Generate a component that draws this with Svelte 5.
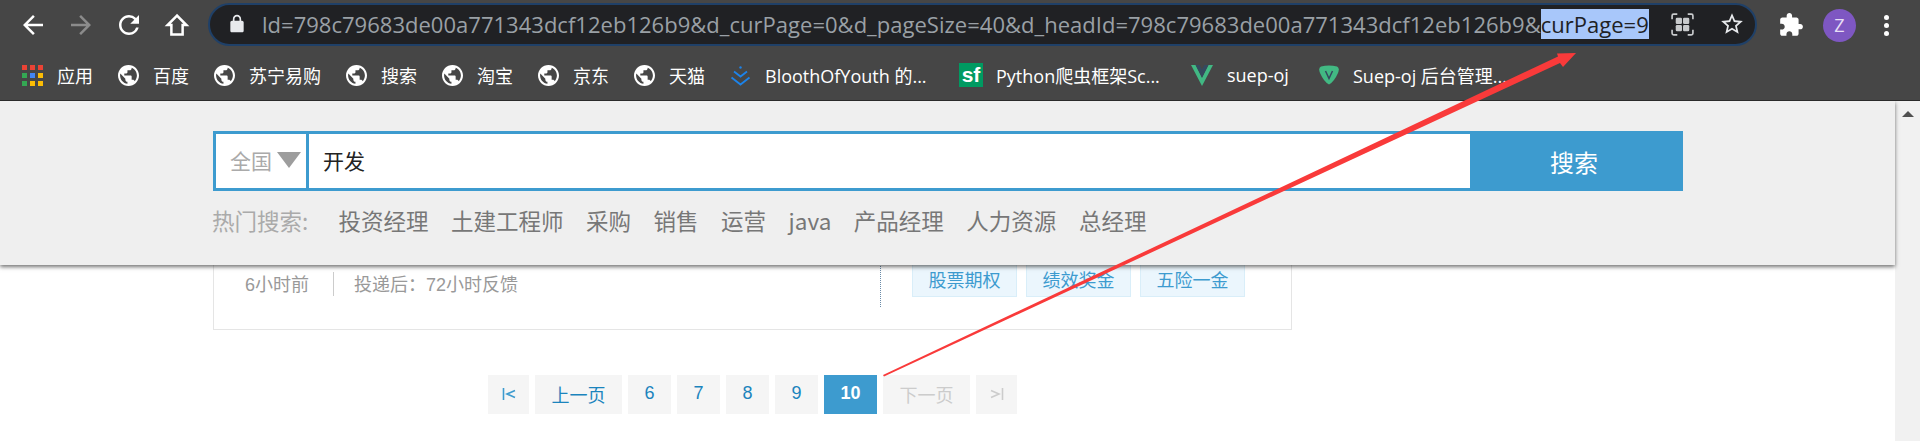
<script lang="ts">
	const bookmarks = [
		{ label: '百度', icon: 'globe' },
		{ label: '苏宁易购', icon: 'globe' },
		{ label: '搜索', icon: 'globe' },
		{ label: '淘宝', icon: 'globe' },
		{ label: '京东', icon: 'globe' },
		{ label: '天猫', icon: 'globe' },
		{ label: 'BloothOfYouth 的...', icon: 'chevrons', width: 169 },
		{ label: 'Python爬虫框架Sc...', icon: 'sf', width: 169 },
		{ label: 'suep-oj', icon: 'vue', width: 67 },
		{ label: 'Suep-oj 后台管理...', icon: 'suep' }
	];
	const appColors = ['#ea4335', '#ea4335', '#ea4335', '#34a853', '#4285f4', '#fbbc05', '#34a853', '#fbbc05', '#fbbc05'];
	const hotWords = ['投资经理', '土建工程师', '采购', '销售', '运营', 'java', '产品经理', '人力资源', '总经理'];
	const tags = ['股票期权', '绩效奖金', '五险一金'];
	const pages = [6, 7, 8, 9];
	const urlQuery = 'ld=798c79683de00a771343dcf12eb126b9&d_curPage=0&d_pageSize=40&d_headId=798c79683de00a771343dcf12eb126b9&';
</script>

<div class="chrome">
	<div class="toolbar">
		<svg class="nav" viewBox="0 0 24 24"><path d="M20 11H7.830l5.590-5.590L12 4l-8 8 8 8 1.410-1.410L7.830 13H20v-2z" /></svg>
		<svg class="nav forward" viewBox="0 0 24 24"><path d="M4 11h12.170l-5.590-5.590L12 4l8 8-8 8-1.410-1.410L16.170 13H4v-2z" /></svg>
		<svg class="nav" viewBox="0 0 24 24"><path d="M17.650 6.350A7.958 7.958 0 0 0 12 4c-4.420 0-7.990 3.580-7.990 8s3.570 8 7.990 8c3.730 0 6.840-2.550 7.730-6h-2.080A5.990 5.990 0 0 1 12 18c-3.310 0-6-2.690-6-6s2.690-6 6-6c1.660 0 3.140.69 4.220 1.780L13 11h7V4l-2.350 2.350z" /></svg>
		<svg class="nav home" viewBox="0 0 24 24"><path d="M12 4.500L4.500 12H7.500V19.500H16.500V12H19.500z" /></svg>
		<div class="omnibox">
			<svg class="lock" viewBox="0 0 24 24"><path d="M18 8h-1V6c0-2.760-2.240-5-5-5S7 3.240 7 6v2H6c-1.100 0-2 .9-2 2v10c0 1.100.9 2 2 2h12c1.100 0 2-.9 2-2V10c0-1.100-.9-2-2-2zM9 6c0-1.660 1.340-3 3-3s3 1.340 3 3v2H9V6z" /></svg>
			<div class="url">{urlQuery}<span class="selected">curPage=9</span></div>
			<svg class="qr" viewBox="0 0 24 24" fill="none">
				<path d="M2 7V3.500A1.500 1.500 0 0 1 3.500 2H7M17 2h3.500A1.500 1.500 0 0 1 22 3.500V7M22 17v3.500a1.500 1.500 0 0 1-1.500 1.500H17M7 22H3.500A1.500 1.500 0 0 1 2 20.500V17" stroke="#c8cacc" stroke-width="1.600" />
				<rect x="5.500" y="5.500" width="6" height="6" rx="1.200" fill="#c8cacc" />
				<rect x="12.500" y="5.500" width="6" height="6" rx="1.200" fill="#c8cacc" />
				<rect x="5.500" y="12.500" width="6" height="6" rx="1.200" fill="#c8cacc" />
				<rect x="12.500" y="12.500" width="6" height="6" rx="1.200" fill="#c8cacc" />
			</svg>
			<svg class="star" viewBox="0 0 24 24"><path d="M22 9.240l-7.190-.62L12 2 9.190 8.630 2 9.240l5.460 4.730L5.820 21 12 17.270 18.180 21l-1.630-7.030L22 9.240zM12 15.400l-3.760 2.270 1-4.280-3.320-2.880 4.380-.38L12 6.100l1.710 4.040 4.380.38-3.320 2.880 1 4.280L12 15.400z" /></svg>
		</div>
		<svg class="puzzle" viewBox="0 0 24 24"><path d="M20.500 11H19V7c0-1.100-.9-2-2-2h-4V3.500C13 2.120 11.880 1 10.500 1S8 2.120 8 3.500V5H4c-1.100 0-1.990.9-1.990 2v3.800H3.500c1.490 0 2.700 1.210 2.700 2.700s-1.210 2.700-2.700 2.700H2V20c0 1.100.9 2 2 2h3.800v-1.500c0-1.490 1.210-2.700 2.700-2.700 1.490 0 2.700 1.210 2.700 2.700V22H17c1.100 0 2-.9 2-2v-4h1.500c1.380 0 2.500-1.120 2.500-2.500S21.880 11 20.500 11z" /></svg>
		<div class="avatar">Z</div>
		<div class="kebab"><i></i><i></i><i></i></div>
	</div>
	<div class="bookmarks">
		<div class="bookmark">
			<div class="apps">
				{#each appColors as c}
					<i style:background={c}></i>
				{/each}
			</div>
			<span>应用</span>
		</div>
		{#each bookmarks as b}
			<div class="bookmark">
				{#if b.icon === 'globe'}
					<svg class="fav" viewBox="2 2 20 20"><path fill="#fff" d="M12 2C6.480 2 2 6.480 2 12s4.480 10 10 10 10-4.480 10-10S17.520 2 12 2zm-1 17.930c-3.950-.49-7-3.850-7-7.930 0-.62.08-1.210.21-1.790L9 15v1c0 1.100.9 2 2 2v1.930zm6.900-2.540c-.26-.81-1-1.390-1.900-1.390h-1v-3c0-.55-.45-1-1-1H8v-2h2c.55 0 1-.45 1-1V7h2c1.100 0 2-.9 2-2v-.41c2.930 1.190 5 4.060 5 7.410 0 2.080-.8 3.970-2.100 5.390z" /></svg>
				{:else if b.icon === 'chevrons'}
					<svg class="fav" viewBox="0 0 21 21" fill="none" stroke="#1c83ea" stroke-width="1.800">
						<path d="M4 6.500l6.500 5 6.500-5M1.500 12.500l9 7 9-7" />
						<circle cx="10.500" cy="2.500" r="1.200" fill="#1c83ea" stroke="none" />
					</svg>
				{:else if b.icon === 'sf'}
					<div class="sf">sf</div>
				{:else if b.icon === 'vue'}
					<svg class="vue" viewBox="0 0 24 24">
						<path fill="#41b883" d="M0 1h5l7 14 7-14h5L12 24z" />
						<path fill="#35495e" d="M5 1h4.500L12 6l2.500-5H19l-7 14z" />
					</svg>
				{:else}
					<svg class="suep" viewBox="0 0 20 20">
						<path fill="#42b983" d="M2 1.500Q10-.5 18 1.500Q21 3 19 8Q15 17 10 19.500Q5 17 1 8Q-1 3 2 1.500z" />
						<path fill="none" stroke="#35495e" stroke-width="1.500" d="M6.500 6l3.500 7.500L13.500 6" />
					</svg>
				{/if}
				<span class="label" style:width={b.width ? `${b.width}px` : undefined}>{b.label}</span>
			</div>
		{/each}
	</div>
</div>

<div class="viewport">
	<div class="page">
		<header class="search-panel">
			<div class="search">
				<div class="city">
					<span>全国</span>
					<i class="caret"></i>
				</div>
				<div class="query">开发</div>
				<div class="submit">搜索</div>
			</div>
			<div class="hot">
				<span class="hot-label">热门搜索:</span>
				{#each hotWords as word}
					<span class="hot-word">{word}</span>
				{/each}
			</div>
		</header>

		<div class="content">
			<div class="card">
				<div class="meta">
					<span>6小时前</span>
					<i class="sep"></i>
					<span>投递后：72小时反馈</span>
				</div>
				<div class="tags">
					{#each tags as tag}
						<span class="tag">{tag}</span>
					{/each}
				</div>
			</div>

			<nav class="pager">
				<div class="pg edge">
					<svg viewBox="0 0 14 14" fill="none" stroke="#3d9bcf" stroke-width="1.600"><path d="M1.500 1v12M13 3.500L5 7l8 3.500" /></svg>
				</div>
				<div class="pg wide">上一页</div>
				{#each pages as p}
					<div class="pg num">{p}</div>
				{/each}
				<div class="pg current">10</div>
				<div class="pg wide off">下一页</div>
				<div class="pg edge">
					<svg viewBox="0 0 14 14" fill="none" stroke="#cccccc" stroke-width="1.600"><path d="M12.500 1v12M1 3.500L9 7l-8 3.500" /></svg>
				</div>
			</nav>
		</div>
	</div>
	<div class="scrollbar"><i class="up"></i></div>
</div>

<svg class="annotation" viewBox="0 0 1920 441">
	<polygon fill="#f93a3a" points="883,375 1558,56.500 1557,53.500 1576,53 1563,67 1560,63 884,376.500" />
</svg>

<style>
	:global(body) {
		margin: 0;
		height: 441px;
		overflow: hidden;
		background: #fff;
		font-family: "Noto Sans CJK SC", sans-serif;
	}

	.chrome {
		height: 100px;
		background: #464646;
		border-bottom: 1px solid #2a2a2a;
	}

	.toolbar {
		height: 50px;
		display: flex;
		align-items: center;
	}

	.nav {
		width: 30px;
		height: 30px;
		margin-left: 18px;
		flex: none;
		fill: #fff;
	}

	.forward { fill: #8b8b8b; }
	.home { fill: none; stroke: #fff; stroke-width: 2; }

	.omnibox {
		width: 1549px;
		height: 43px;
		margin-left: 16px;
		box-sizing: border-box;
		display: flex;
		align-items: center;
		background: #202124;
		border: 2px solid #1f4068;
		border-radius: 22px;
		position: relative;
		top: -1px;
	}

	.lock {
		width: 20px;
		height: 20px;
		margin-left: 17px;
		fill: #e8eaed;
		flex: none;
	}

	.url {
		width: 1392px;
		margin-left: 15px;
		flex: none;
		white-space: nowrap;
		overflow: hidden;
		font-family: "Open Sans", sans-serif;
		font-size: 22px;
		letter-spacing: 0.02px;
		line-height: 30px;
		color: #9aa0a6;
	}

	.selected {
		background: #a8c7fa;
		color: #202124;
		display: inline-block;
	}

	.qr {
		width: 25px;
		height: 25px;
		margin-left: 16px;
		flex: none;
	}

	.star {
		width: 26px;
		height: 26px;
		margin-left: 24px;
		fill: #e8eaed;
		flex: none;
	}

	.puzzle {
		width: 26px;
		height: 26px;
		margin-left: 21px;
		fill: #fff;
		flex: none;
	}

	.avatar {
		width: 33px;
		height: 33px;
		margin-left: 19px;
		border-radius: 50%;
		background: #7e57c2;
		color: #e6def5;
		font-family: "Open Sans", sans-serif;
		font-size: 18px;
		display: flex;
		align-items: center;
		justify-content: center;
		flex: none;
	}

	.kebab {
		margin-left: 28px;
		display: flex;
		flex-direction: column;
		gap: 3px;
	}

	.kebab i {
		width: 5px;
		height: 5px;
		border-radius: 50%;
		background: #fff;
	}

	.bookmarks {
		height: 50px;
		padding-left: 22px;
		display: flex;
		align-items: center;
		gap: 25px;
	}

	.bookmark {
		display: flex;
		align-items: center;
		gap: 14px;
		color: #fff;
		font-size: 18px;
		font-family: "Open Sans", "Noto Sans CJK SC", sans-serif;
		white-space: nowrap;
	}

	.apps {
		width: 21px;
		height: 21px;
		display: grid;
		grid-template-columns: repeat(3, 5px);
		grid-auto-rows: 5px;
		gap: 3px;
	}

	.fav {
		width: 21px;
		height: 21px;
		flex: none;
	}

	.sf {
		width: 24px;
		height: 24px;
		margin-right: -1px;
		background: #009a61;
		color: #fff;
		font-family: "Liberation Sans", sans-serif;
		font-size: 21px;
		font-weight: 700;
		line-height: 24px;
		text-align: center;
	}

	.vue {
		width: 24px;
		height: 22px;
		margin-right: -1px;
	}

	.suep {
		width: 20px;
		height: 20px;
	}

	.label {
		display: block;
	}

	.viewport {
		height: 340px;
		display: flex;
		overflow: hidden;
	}

	.page {
		width: 1895px;
		flex: none;
	}

	.search-panel {
		position: relative;
		z-index: 2;
		height: 164px;
		box-sizing: border-box;
		padding: 30px 0 0 213px;
		background: #efefef;
		box-shadow: 0 2px 4px rgba(0, 0, 0, 0.55);
	}

	.search {
		width: 1470px;
		height: 60px;
		display: flex;
	}

	.city {
		width: 93px;
		box-sizing: border-box;
		padding: 0 0 2px 14px;
		display: flex;
		align-items: center;
		gap: 5px;
		background: #fff;
		border: 3px solid #3d9bcf;
		border-right: 0;
		color: #aaa;
		font-size: 21px;
	}

	.caret {
		border-left: 12px solid transparent;
		border-right: 12px solid transparent;
		border-top: 16px solid #9d9d9d;
	}

	.query {
		flex: 1;
		box-sizing: border-box;
		padding: 0 0 2px 14px;
		display: flex;
		align-items: center;
		background: #fff;
		border: 3px solid #3d9bcf;
		border-right: 0;
		color: #222;
		font-size: 21px;
	}

	.submit {
		width: 213px;
		box-sizing: border-box;
		padding-right: 5px;
		background: #3d9bcf;
		color: #fff;
		font-size: 24px;
		display: flex;
		align-items: center;
		justify-content: center;
	}

	.hot {
		margin-top: 14px;
		display: flex;
		align-items: center;
		height: 30px;
		gap: 22.5px;
		font-size: 22.5px;
		color: #777;
	}

	.hot-label {
		color: #aaa;
		width: 104px;
		margin-left: -1px;
		font-size: 22.5px;
	}

	.content {
		width: 1079px;
		margin: -24px 0 0 213px;
	}

	.card {
		height: 89px;
		box-sizing: border-box;
		display: flex;
		align-items: flex-start;
		background: #fff;
		border: 1px solid #e5e5e5;
	}

	.meta {
		width: 667px;
		height: 65px;
		box-sizing: border-box;
		padding: 30px 0 0 31px;
		display: flex;
		align-items: flex-start;
		gap: 20px;
		color: #999;
		font-family: "Liberation Sans", "Noto Sans CJK SC", sans-serif;
		font-size: 18px;
		line-height: 26px;
		border-right: 1px dotted #6a8ba8;
	}

	.sep {
		width: 1px;
		height: 24px;
		margin-left: 4px;
		background: #ccc;
	}

	.tags {
		padding: 19px 0 0 31px;
		display: flex;
		gap: 9px;
	}

	.tag {
		width: 105px;
		height: 36px;
		box-sizing: border-box;
		display: flex;
		align-items: center;
		justify-content: center;
		background: #ebf6fd;
		border: 1px solid #d9eef9;
		color: #3d9bcf;
		font-size: 18px;
	}

	.pager {
		margin-top: 45px;
		display: flex;
		justify-content: center;
		gap: 6px;
	}

	.pg {
		height: 39px;
		box-sizing: border-box;
		padding-bottom: 2px;
		display: flex;
		align-items: center;
		justify-content: center;
		background: #f5f5f5;
		color: #1b84bd;
		font-family: "Liberation Sans", "Noto Sans CJK SC", sans-serif;
		font-size: 18px;
	}

	.edge { width: 41px; }
	.edge svg { width: 14px; height: 14px; }
	.wide { width: 87px; }
	.num { width: 43px; }
	.off { color: #ccc; }

	.current {
		width: 53px;
		background: #3d9bcf;
		color: #fff;
		font-weight: 700;
	}

	.scrollbar {
		flex: 1;
		background: #f1f1f1;
		display: flex;
		justify-content: center;
		padding-top: 10px;
	}

	.up {
		width: 0;
		height: 0;
		border-left: 6px solid transparent;
		border-right: 6px solid transparent;
		border-bottom: 6px solid #505050;
	}

	.annotation {
		position: absolute;
		left: 0;
		top: 0;
		width: 1920px;
		height: 441px;
		z-index: 5;
		pointer-events: none;
	}
</style>
